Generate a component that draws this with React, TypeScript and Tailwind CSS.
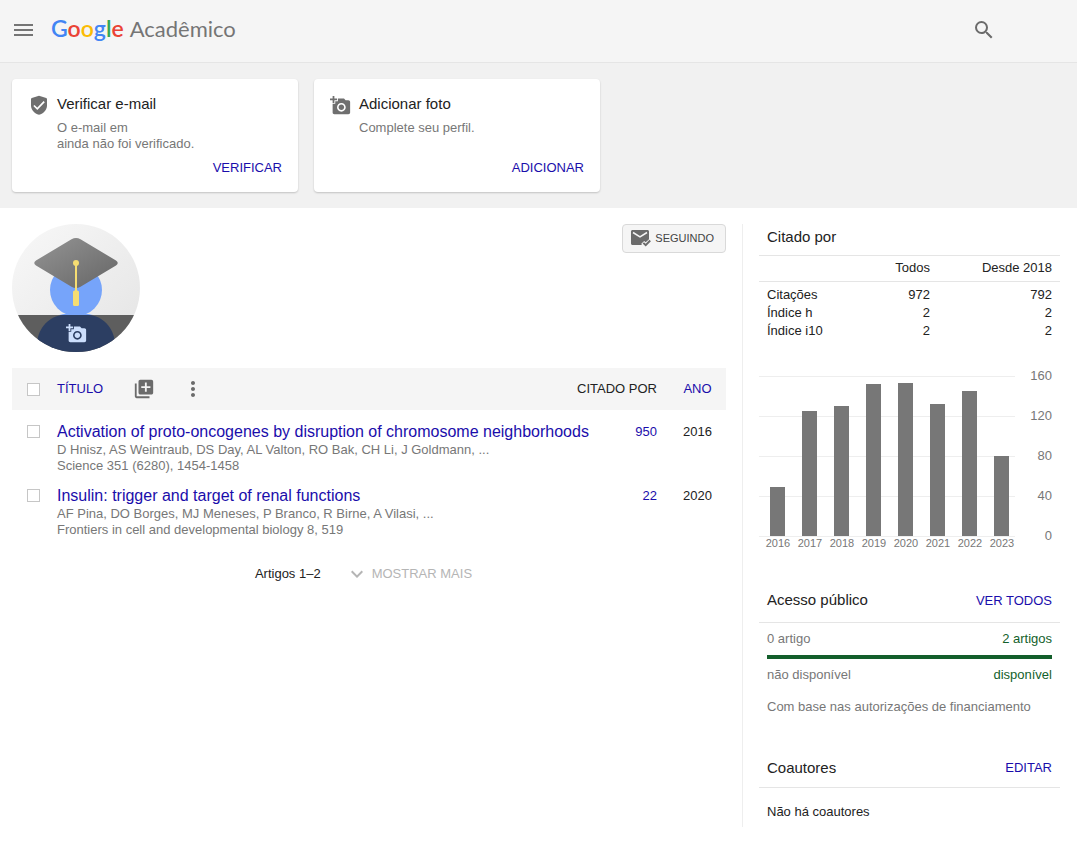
import React from "react";
import { MdExpandMore, MdLibraryAdd, MdMoreVert, MdSearch } from "react-icons/md";

const CAMERA =
  "M3 4V1h2v3h3v2H5v3H3V6H0V4h3zm3 6V7h3V4h7l1.83 2H21c1.1 0 2 .9 2 2v12c0 1.1-.9 2-2 2H5c-1.1 0-2-.9-2-2V10h3zm7 9c2.76 0 5-2.24 5-5s-2.24-5-5-5-5 2.24-5 5 2.24 5 5 5zm-3.2-5c0 1.77 1.43 3.2 3.2 3.2s3.2-1.43 3.2-3.2-1.43-3.2-3.2-3.2-3.2 1.43-3.2 3.2z";

function CameraIcon() {
  return (
    <svg viewBox="0 0 24 24" className="h-[21px] w-[21px]" fill="currentColor" aria-hidden="true">
      <path d={CAMERA} />
    </svg>
  );
}

function ShieldIcon() {
  return (
    <svg viewBox="-2 0 21 21" className="h-[21px] w-[21px]" fill="none" aria-hidden="true">
      <path
        d="M9 .8 16.2 3c.5.2.8.5.8 1v6.2c0 4.6-3.4 8.2-8 9.6-4.6-1.4-8-5-8-9.6V4c0-.5.3-.8.8-1z"
        fill="currentColor"
      />
      <path d="m3.9 10.5 3.4 3.3 6.9-7.2" stroke="#fff" strokeWidth="1.7" />
    </svg>
  );
}

function MailCheckIcon() {
  return (
    <svg viewBox="0 0 20 17" className="h-[17px] w-5" fill="none" aria-hidden="true">
      <path
        d="M1.5 0h15c.8 0 1.5.7 1.5 1.5v7.8l-3.3 3-1.600-1.400-3 3 1 1.100H1.500C.7 15 0 14.300 0 13.500v-12C0 .7.7 0 1.500 0z"
        fill="#6b6b6b"
      />
      <path d="m2 2.5 7 4.400 7-4.400" stroke="#f5f5f5" strokeWidth="1.5" />
      <path d="m12.3 12.9 2.400 2.300 4.500-4.700" stroke="#6b6b6b" strokeWidth="2" />
    </svg>
  );
}

function Avatar() {
  return (
    <svg viewBox="0 0 128 128" className="h-32 w-32" aria-hidden="true">
      <defs>
        <clipPath id="disc">
          <circle cx="64" cy="64" r="64" />
        </clipPath>
        <linearGradient id="back" x1="0" y1="0" x2="1" y2="1">
          <stop offset="0" stopColor="#f8f8f8" />
          <stop offset="1" stopColor="#e4e4e4" />
        </linearGradient>
        <linearGradient id="cap" x1="0" y1="0" x2="1" y2="1">
          <stop offset="0.2" stopColor="#8b8b8b" />
          <stop offset="0.9" stopColor="#6a6a6a" />
        </linearGradient>
      </defs>
      <g clipPath="url(#disc)">
        <rect width="128" height="128" fill="url(#back)" />
        <circle cx="64" cy="66" r="26" fill="#76a4fa" />
        <path d="M47 91c5-1 8-2 17-2s12 1 17 2z" fill="#76a4fa" />
        <rect y="91" width="128" height="37" fill="#5e5e5e" />
        <path d="M49 91h30c14 3 24 15 24 30v9H25v-9c0-15 10-27 24-30z" fill="#2c3e62" />
        <path
          d="M59.5 15.3Q64 12.5 68.5 15.3L104 36.5Q107.5 39 104 41.5L68.5 62.7Q64 65.5 59.5 62.7L24 41.5Q20.5 39 24 36.5Z"
          fill="url(#cap)"
        />
        <circle cx="64" cy="39" r="3" fill="#f6dd72" />
        <rect x="63" y="39" width="2" height="30" fill="#f6dd72" />
        <rect x="61" y="66.5" width="6" height="15.5" rx="1.5" fill="#f6dd72" />
        <path transform="translate(54 99) scale(.875)" d={CAMERA} fill="#ccdefc" />
      </g>
    </svg>
  );
}

function PromptCard(props: { icon: React.ReactNode; title: string; lines: string[]; action: string }) {
  return (
    <section className="flex w-[286px] rounded-sm bg-white pt-[15px] pr-4 pb-4 shadow-[0_1px_2px_rgba(0,0,0,0.2)]">
      <div className="flex w-[45px] shrink-0 justify-end pt-px pr-2 text-[#6f6f6f]">{props.icon}</div>
      <div className="flex flex-1 flex-col">
        <h2 className="text-[15px] leading-5">{props.title}</h2>
        <p className="mt-[6px] leading-4 text-[#777]">
          {props.lines.map((line) => (
            <span key={line} className="block">
              {line}
            </span>
          ))}
        </p>
        <button type="button" className="mt-auto self-end pt-2 leading-4 text-[#1a0dab]">
          {props.action}
        </button>
      </div>
    </section>
  );
}

const articles = [
  {
    title: "Activation of proto-oncogenes by disruption of chromosome neighborhoods",
    authors: "D Hnisz, AS Weintraub, DS Day, AL Valton, RO Bak, CH Li, J Goldmann, ...",
    venue: "Science 351 (6280), 1454-1458",
    cited: 950,
    year: 2016,
  },
  {
    title: "Insulin: trigger and target of renal functions",
    authors: "AF Pina, DO Borges, MJ Meneses, P Branco, R Birne, A Vilasi, ...",
    venue: "Frontiers in cell and developmental biology 8, 519",
    cited: 22,
    year: 2020,
  },
];

const CHECKBOX = "block h-[13px] w-[13px] appearance-none border border-[#c6c6c6] bg-white checked:bg-[#4d90fe]";

function Articles() {
  return (
    <table className="w-full table-fixed border-collapse text-left">
      <thead>
        <tr className="h-[42px] bg-[#f5f5f5]">
          <th className="w-[45px] pl-[15px]">
            <input type="checkbox" aria-label="Selecionar tudo" className={CHECKBOX} />
          </th>
          <th className="font-normal">
            <div className="flex items-center">
              <a href="#titulo" className="text-[#1a0dab]">
                TÍTULO
              </a>
              <button type="button" aria-label="Adicionar artigos" className="ml-[30px] text-[#6b6b6b]">
                <MdLibraryAdd className="h-[22px] w-[22px]" />
              </button>
              <button type="button" aria-label="Mais" className="ml-[26px] text-[#6b6b6b]">
                <MdMoreVert className="h-6 w-6" />
              </button>
            </div>
          </th>
          <th className="w-[105px] pr-3 text-right font-normal">CITADO POR</th>
          <th className="w-[57px] text-center font-normal">
            <a href="#ano" className="text-[#1a0dab]">
              ANO
            </a>
          </th>
        </tr>
      </thead>
      <tbody>
        {articles.map((a) => (
          <tr key={a.title} className="align-top">
            <td className="pt-[15px] pl-[15px]">
              <input type="checkbox" aria-label={a.title} className={CHECKBOX} />
            </td>
            <td className="pt-3 leading-4 whitespace-nowrap text-[#777]">
              <a href="#artigo" className="block text-base leading-5 text-[#1a0dab]">
                {a.title}
              </a>
              <div>{a.authors}</div>
              <div>{a.venue}</div>
            </td>
            <td className="pt-3 pr-3 text-right leading-5">
              <a href="#citado" className="text-[#1a0dab]">
                {a.cited}
              </a>
            </td>
            <td className="pt-3 text-center leading-5">{a.year}</td>
          </tr>
        ))}
      </tbody>
    </table>
  );
}

const citations = [
  { year: 2016, count: 49 },
  { year: 2017, count: 125 },
  { year: 2018, count: 130 },
  { year: 2019, count: 152 },
  { year: 2020, count: 153 },
  { year: 2021, count: 132 },
  { year: 2022, count: 145 },
  { year: 2023, count: 80 },
];
const ticks = [160, 120, 80, 40, 0];

function Chart() {
  return (
    <div className="mt-[26px] flex justify-between pr-2 text-[#777]">
      <div className="relative w-64 pt-[10px]">
        {ticks.map((t) => (
          <div key={t} className={t === 0 ? "h-px bg-[#eee]" : "h-10 border-t border-[#eee]"} />
        ))}
        <div className="absolute inset-x-0 top-[10px] flex pl-[3px]">
          {citations.map((c) => (
            <div key={c.year} className="flex w-8 shrink-0 flex-col items-center">
              <div className="flex h-40 w-4 items-end pr-px">
                <div className="w-full bg-[#777]" style={{ height: `${(c.count / 160) * 100}%` }} />
              </div>
              <span className="text-[11px] leading-[14px]">{c.year}</span>
            </div>
          ))}
        </div>
      </div>
      <div className="text-right leading-5">
        {ticks.map((t) => (
          <div key={t} className={t === 0 ? "h-5" : "h-10"}>
            {t}
          </div>
        ))}
      </div>
    </div>
  );
}

export default function App() {
  return (
    <div className="min-h-screen bg-white font-['Liberation_Sans',Arial,sans-serif] text-[13px] text-[#222]">
      <header className="flex h-[63px] items-center border-b border-[#e5e5e5] bg-[#f5f5f5] pr-[81px] pb-[2px] pl-[14px]">
        <button type="button" aria-label="Menu" className="text-[#757575]">
          <svg viewBox="0 0 19 12" className="h-3 w-[19px]" fill="currentColor" aria-hidden="true">
            <path d="M0 0h19v2H0zM0 5h19v2H0zM0 10h19v2H0z" />
          </svg>
        </button>
        <a
          href="#inicio"
          className="ml-[18px] flex items-baseline gap-[6px] pb-1 font-[Lato,sans-serif] text-[22px] leading-7 text-[#757575]"
        >
          <span className="text-[23px] font-semibold">
            <span className="text-[#4285f4]">G</span>
            <span className="text-[#ea4335]">o</span>
            <span className="text-[#fbbc05]">o</span>
            <span className="text-[#4285f4]">g</span>
            <span className="text-[#34a853]">l</span>
            <span className="text-[#ea4335]">e</span>
          </span>
          <span>Acadêmico</span>
        </a>
        <button type="button" aria-label="Pesquisar" className="ml-auto text-[#6b6b6b]">
          <MdSearch className="h-6 w-6" />
        </button>
      </header>

      <div className="flex gap-4 bg-[#f1f1f1] px-3 py-4">
        <PromptCard
          icon={<ShieldIcon />}
          title="Verificar e-mail"
          lines={["O e-mail em", "ainda não foi verificado."]}
          action="VERIFICAR"
        />
        <PromptCard icon={<CameraIcon />} title="Adicionar foto" lines={["Complete seu perfil."]} action="ADICIONAR" />
      </div>

      <main className="flex gap-4 py-4 pr-[17px] pl-3">
        <div className="min-w-0 flex-1">
          <div className="mb-4 flex items-start justify-between">
            <button type="button" aria-label="Alterar foto" className="rounded-full">
              <Avatar />
            </button>
            <button
              type="button"
              className="flex h-[29px] items-center gap-1 rounded-sm border border-[#d9d9d9] bg-[#f5f5f5] pr-[11px] pl-2 text-[11px] text-[#444]"
            >
              <MailCheckIcon />
              SEGUINDO
            </button>
          </div>
          <Articles />
          <div className="mt-6 flex items-center justify-center">
            <span>Artigos 1–2</span>
            <button type="button" disabled className="ml-6 flex items-center gap-[3px] pr-[11px] text-[#b5b5b5]">
              <MdExpandMore className="h-6 w-6" />
              MOSTRAR MAIS
            </button>
          </div>
        </div>

        <aside className="w-[318px] shrink-0 border-l border-[#eee] pl-4">
          <h2 className="border-b border-[#e5e5e5] px-2 pt-[3px] pb-2 text-[15px] leading-5">Citado por</h2>
          <table className="w-full border-collapse text-right leading-[18px]">
            <thead>
              <tr className="h-[25px] border-b border-[#e5e5e5]">
                <th aria-label="Métrica" />
                <th className="font-normal">Todos</th>
                <th className="w-[130px] pr-2 font-normal">Desde 2018</th>
              </tr>
            </thead>
            <tbody className="before:block before:h-1">
              {[
                ["Citações", 972, 792],
                ["Índice h", 2, 2],
                ["Índice i10", 2, 2],
              ].map(([name, all, recent]) => (
                <tr key={name}>
                  <th className="pl-2 text-left font-normal">{name}</th>
                  <td>{all}</td>
                  <td className="pr-2">{recent}</td>
                </tr>
              ))}
            </tbody>
          </table>
          <Chart />

          <section className="mt-11">
            <div className="flex items-end justify-between border-b border-[#e5e5e5] px-2 pb-3">
              <h2 className="text-[15px] leading-5">Acesso público</h2>
              <a href="#mandatos" className="leading-[18px] text-[#1a0dab]">
                VER TODOS
              </a>
            </div>
            <div className="px-2 pt-2 leading-4 text-[#777]">
              <div className="flex justify-between">
                <span>0 artigo</span>
                <span className="text-[#135f2b]">2 artigos</span>
              </div>
              <div className="my-2 h-1 bg-[#135f2b]" />
              <div className="flex justify-between">
                <span>não disponível</span>
                <span className="text-[#135f2b]">disponível</span>
              </div>
              <p className="mt-4">Com base nas autorizações de financiamento</p>
            </div>
          </section>

          <section className="mt-[43px]">
            <div className="flex items-center justify-between border-b border-[#e5e5e5] px-2 pb-[9px]">
              <h2 className="text-[15px] leading-5">Coautores</h2>
              <a href="#editar" className="text-[#1a0dab]">
                EDITAR
              </a>
            </div>
            <p className="px-2 pt-4 pb-[7px] leading-4">Não há coautores</p>
          </section>
        </aside>
      </main>
    </div>
  );
}
